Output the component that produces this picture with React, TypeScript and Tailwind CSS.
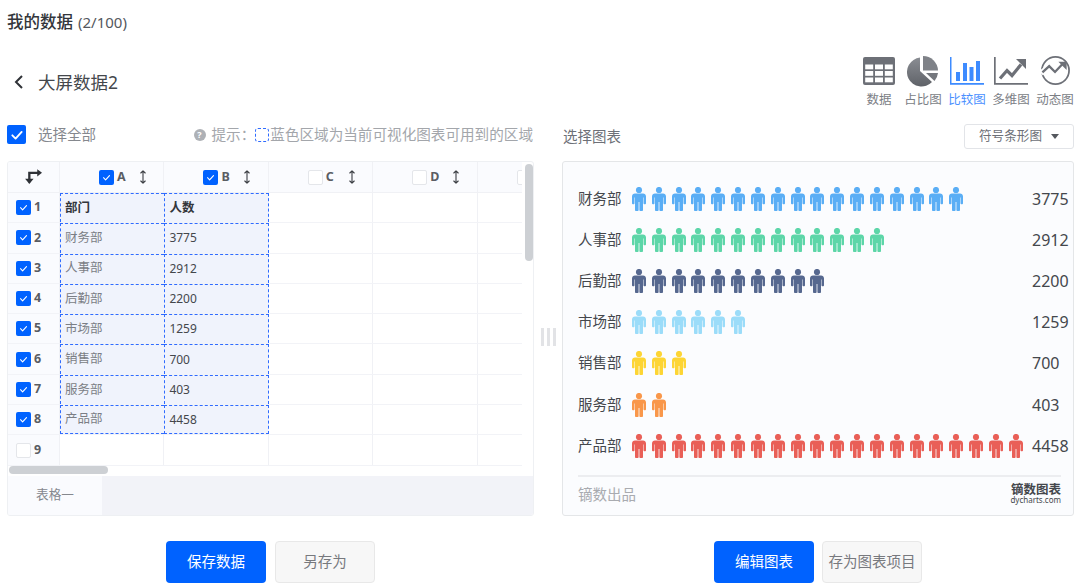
import React from "react";

const FONT = "[font-family:'Noto_Sans','Noto_Sans_CJK_SC',sans-serif]";

function Check({ on = true, size = "s" }: { on?: boolean; size?: "s" | "l" }) {
  const box = size === "l" ? "w-[19px] h-[19px]" : "w-[15px] h-[15px]";
  return (
    <span className={`${box} shrink-0 rounded-[2px] flex items-center justify-center ${on ? "bg-[#0062ff]" : "bg-white border border-[#e4e6ea]"}`}>
      {on && (
        <svg viewBox="0 0 12 12" className={size === "l" ? "w-[14px] h-[14px]" : "w-[9px] h-[9px]"} fill="none" stroke="#fff" strokeWidth={size === "l" ? 1.6 : 1.5} strokeLinecap="round" strokeLinejoin="round">
          <path d="M2 6.3l2.8 2.8L10 3.4" />
        </svg>
      )}
    </span>
  );
}

function SortIcon() {
  return (
    <svg viewBox="0 0 10 16" className="w-[10px] h-[16px]" fill="none" stroke="#3a3d42" strokeWidth="1.1" strokeLinecap="round" strokeLinejoin="round">
      <path d="M5 2v12M2.8 4L5 1.8 7.2 4M2.8 12L5 14.2 7.2 12" />
    </svg>
  );
}

function Person({ color }: { color: string }) {
  return (
    <svg viewBox="0 0 14 24" className="w-[14px] h-[24px] shrink-0" fill={color}>
      <circle cx="7" cy="3" r="3.1" />
      <path d="M3 6.5h8c1.7 0 3 1.3 3 3v6.7c0 .6-.5 1-1.200 1s-1.300-.4-1.300-1V10.500h-.5V23c0 .6-.5 1-1.200 1H8.600c-.7 0-1.200-.4-1.200-1v-8h-.8v8c0 .6-.5 1-1.200 1H4.200C3.500 24 3 23.600 3 23V10.500h-.5v5.700c0 .6-.5 1-1.200 1S0 16.800 0 16.200V9.500c0-1.700 1.300-3 3-3z" />
    </svg>
  );
}

const TOOLS = [
  {
    label: "数据",
    icon: (
      <svg viewBox="0 0 32 28" className="w-[32px] h-[28px]">
        <rect width="32" height="28" rx="2" fill="#6d7077" />
        {[0, 1, 2].map((c) =>
          [0, 1, 2].map((r) => (
            <rect key={`${c}${r}`} x={2.2 + c * 9.8} y={7.5 + r * 6.5} width="8" height="4.800" fill="#fff" />
          ))
        )}
      </svg>
    ),
  },
  {
    label: "占比图",
    icon: (
      <svg viewBox="0 0 32 32" className="w-[32px] h-[32px]">
        <defs>
          <linearGradient id="pie" x1="0" y1="0" x2="0" y2="1">
            <stop offset="0" stopColor="#8a8d93" />
            <stop offset="1" stopColor="#5f6268" />
          </linearGradient>
        </defs>
        <path d="M13 2.600A14.500 14.500 0 1 0 25 27L13 16z" fill="url(#pie)" />
        <path d="M16 1a15 15 0 0 1 15 14.500H16z" fill="#7f8288" />
        <path d="M19 18h12a15 15 0 0 1-3.500 8z" fill="#74777d" />
      </svg>
    ),
  },
  {
    label: "比较图",
    active: true,
    icon: (
      <svg viewBox="0 0 34 28" className="w-[34px] h-[28px]" fill="#3d8bff">
        <path d="M0 0h1.500v26H34v1.800H0z" />
        <rect x="6" y="15" width="4" height="9" />
        <rect x="13" y="6" width="4" height="18" />
        <rect x="19.500" y="10" width="4" height="14" />
        <rect x="26" y="4" width="4" height="20" />
      </svg>
    ),
  },
  {
    label: "多维图",
    icon: (
      <svg viewBox="0 0 34 28" className="w-[34px] h-[28px]">
        <path d="M0 0h1.700v26H34v1.800H0z" fill="#6d7077" />
        <path d="M6 21.500l7-8 5 5 9-11" fill="none" stroke="#6d7077" strokeWidth="3.200" />
        <path d="M22 2h10v10z" fill="#6d7077" />
      </svg>
    ),
  },
  {
    label: "动态图",
    icon: (
      <svg viewBox="0 0 32 32" className="w-[31px] h-[31px]" fill="none">
        <circle cx="16" cy="16" r="14" stroke="#6d7077" strokeWidth="1.800" />
        <path d="M1 19l8.500-7.500 6 6 7.500-8" stroke="#fff" strokeWidth="6" />
        <path d="M2.500 18l7-6.500 6 6 7.500-8" stroke="#6d7077" strokeWidth="2.400" />
        <path d="M19 7h8.500v8.500z" fill="#6d7077" />
      </svg>
    ),
  },
];

const ROWS: [string, string][] = [
  ["部门", "人数"],
  ["财务部", "3775"],
  ["人事部", "2912"],
  ["后勤部", "2200"],
  ["市场部", "1259"],
  ["销售部", "700"],
  ["服务部", "403"],
  ["产品部", "4458"],
  ["", ""],
];

const CHART = [
  { name: "财务部", n: 17, v: "3775", c: "#5aaef5" },
  { name: "人事部", n: 13, v: "2912", c: "#5dd6a8" },
  { name: "后勤部", n: 10, v: "2200", c: "#56688f" },
  { name: "市场部", n: 6, v: "1259", c: "#9bdcf9" },
  { name: "销售部", n: 3, v: "700", c: "#fdd534" },
  { name: "服务部", n: 2, v: "403", c: "#f9974a" },
  { name: "产品部", n: 20, v: "4458", c: "#e95f57" },
];

const DATA_CELL = "bg-[#f0f3fc] border-[#2f6bff] border-dashed border-l border-t";

export default function App() {
  return (
    <div className={`${FONT} w-[1080px] h-[586px] overflow-hidden bg-white flex flex-col px-[7px]`}>
      <div className="h-[44px] flex items-center text-[16.500px] text-[#33363b]">
        <span className="font-medium">我的数据</span>
        <span className="ml-[5px] text-[15px] text-[#55585e]">(2/100)</span>
      </div>

      <div className="h-[74px] flex justify-between">
        <div className="flex items-center h-[76px] pl-[6px] text-[17.500px] text-[#44474c]">
          <svg viewBox="0 0 12 16" className="w-[12px] h-[16px] mr-[13px]" fill="none" stroke="#2f3237" strokeWidth="2">
            <path d="M9 2L3 8l6 6" />
          </svg>
          大屏数据2
        </div>
        <div className="flex pt-[10px] -mr-[4px]">
          {TOOLS.map((t) => (
            <div key={t.label} className={`w-[44px] flex flex-col items-center ${t.active ? "text-[#4a90ff]" : "text-[#7b7e85]"}`}>
              <div className="h-[33px] flex items-center justify-center">{t.icon}</div>
              <div className="mt-[4px] text-[12.500px] leading-[18px] whitespace-nowrap">{t.label}</div>
            </div>
          ))}
        </div>
      </div>

      <div className="flex">
        <div className="w-[527px] shrink-0">
          <div className="h-[43px] flex items-start pt-[7px] justify-between">
            <div className="flex items-center gap-[12px] text-[14.500px] text-[#85888e] h-[19px]">
              <Check size="l" />
              选择全部
            </div>
            <div className="flex items-center text-[14.600px] text-[#a3a6ab] h-[19px] whitespace-nowrap pr-[1px]">
              <span className="w-[12px] h-[12px] rounded-full bg-[#aeb1b6] text-white text-[9px] font-bold leading-[12px] text-center mr-[6px]">?</span>
              提示：
              <span className="w-[14px] h-[14px] rounded-[3px] border border-dashed border-[#2f6bff] mr-[1px]" />
              蓝色区域为当前可视化图表可用到的区域
            </div>
          </div>

          <div className="relative h-[355px] rounded-[3px] border border-[#eef0f3] overflow-hidden flex flex-col">
            <div className="h-[304px] mr-[11px] overflow-hidden">
              <div className="flex h-[31px] bg-[#fafbfe] border-b border-[#f0f1f5]">
                <div className="w-[52px] shrink-0 border-r border-[#f0f1f5] flex items-center justify-center">
                  <svg viewBox="0 0 18 16" className="w-[19px] h-[18px] -mt-[2px] -ml-[3px]" fill="none" stroke="#2f3237" strokeWidth="2.200">
                    <path d="M6 14V5h9" />
                    <path d="M13.500 1.500L18 5l-4.500 3.500z" fill="#2f3237" stroke="none" />
                    <path d="M2 10.500h8L6 15.500z" fill="#2f3237" stroke="none" />
                  </svg>
                </div>
                {["A", "B", "C", "D", ""].map((l, i) => (
                  <div key={i} className="w-[104.400px] shrink-0 border-r border-[#f0f1f5] flex items-center pl-[39px] text-[12.500px] font-bold text-[#5a5d63]">
                    <Check on={i < 2} />
                    {l && <span className="ml-[3px] w-[21px]">{l}</span>}
                    {l && <SortIcon />}
                  </div>
                ))}
              </div>
              {ROWS.map((r, i) => (
                <div key={i} className="flex h-[30.300px] border-b border-[#f2f3f7] text-[12.500px]">
                  <div className="w-[52px] shrink-0 bg-[#fafbfe] border-r border-[#f0f1f5] flex items-center pl-[8px] gap-[3px] font-bold text-[#5a5d63]">
                    <Check on={i < 8} />
                    {i + 1}
                  </div>
                  {[0, 1].map((c) => (
                    <div
                      key={c}
                      className={`w-[104.400px] shrink-0 flex items-center pl-[4px] ${i < 8 ? `${DATA_CELL} ${c === 1 ? "border-r" : ""} ${i === 7 ? "border-b" : ""}` : "border-r border-[#f0f1f5]"} ${i === 0 ? "font-bold text-[#33363b]" : c === 0 ? "text-[#7b7e85]" : "text-[12px] text-[#44474c]"}`}
                    >
                      {r[c]}
                    </div>
                  ))}
                  {[0, 1, 2].map((c) => (
                    <div key={c} className="w-[104.400px] shrink-0 border-r border-[#f0f1f5]" />
                  ))}
                </div>
              ))}
            </div>
            <div className="h-[10px] pl-[1px] shrink-0">
              <div className="w-[99px] h-[8px] rounded-full bg-[#cdd0d4]" />
            </div>
            <div className="flex-1 flex bg-[#f2f3f8]">
              <div className="w-[94px] bg-[#fafbfe] flex items-center justify-center text-[12.600px] text-[#85888e]">表格一</div>
            </div>
            <div className="absolute top-[2px] right-0 w-[8px] h-[97px] rounded-full bg-[#cdd0d4]" />
          </div>

          <div className="flex justify-center gap-[9px] mt-[25px]">
            <button className="w-[100px] h-[42px] rounded-[4px] bg-[#0062ff] text-white text-[14.500px]">保存数据</button>
            <button className="w-[100px] h-[42px] rounded-[4px] bg-[#f7f7f7] border border-[#e8e8e8] text-[#77797e] text-[14.500px]">另存为</button>
          </div>
        </div>

        <div className="w-[28px] shrink-0 flex items-start justify-center pt-[210px]">
          <div className="flex gap-[3px]">
            <span className="w-[3px] h-[18px] bg-[#e2e3e6]" />
            <span className="w-[3px] h-[18px] bg-[#e2e3e6]" />
            <span className="w-[3px] h-[18px] bg-[#e2e3e6]" />
          </div>
        </div>

        <div className="w-[512px] shrink-0">
          <div className="h-[43px] flex justify-between items-start pt-[6px] text-[14.500px] text-[#6d7077]">
            <span className="leading-[25px] pl-[1px]">选择图表</span>
            <div className="w-[110px] h-[25px] rounded-[3px] border border-[#e2e4e8] flex items-center justify-center gap-[9px] text-[12.600px] text-[#6d7077]">
              符号条形图
              <span className="w-0 h-0 border-x-[4.500px] border-x-transparent border-t-[5px] border-t-[#55585e]" />
            </div>
          </div>

          <div className="h-[355px] rounded-[3px] border border-[#e4e6e8] bg-[#fbfcfe] pl-[15px] pr-[12px] flex flex-col">
            <div className="h-[313px] pt-[16px]">
              {CHART.map((d) => (
                <div key={d.name} className="h-[41.200px] flex items-center">
                  <span className="w-[54px] shrink-0 text-[14.500px] text-[#44474c]">{d.name}</span>
                  <div className="flex gap-[5.840px] flex-1">
                    {Array.from({ length: d.n }).map((_, i) => (
                      <Person key={i} color={d.c} />
                    ))}
                  </div>
                  <span className="shrink-0 w-[38px] -mr-[9px] text-left text-[16px] text-[#44474c]">{d.v}</span>
                </div>
              ))}
            </div>
            <div className="flex-1 border-t-2 border-[#ecedf0] flex items-center justify-between">
              <span className="text-[14.500px] text-[#a9abb0] -mt-[2px]">镝数出品</span>
              <div className="flex flex-col items-end text-[#44474c] -mt-[5px]">
                <span className="text-[12.500px] leading-[13px] font-bold [font-family:'Noto_Sans_CJK_SC',serif]">镝数图表</span>
                <span className="text-[8px] leading-[10px]">dycharts.com</span>
              </div>
            </div>
          </div>

          <div className="flex justify-center gap-[8px] mt-[25px]">
            <button className="w-[100px] h-[42px] rounded-[4px] bg-[#0062ff] text-white text-[14.500px]">编辑图表</button>
            <button className="w-[100px] h-[42px] rounded-[4px] bg-[#f7f7f7] border border-[#e8e8e8] text-[#77797e] text-[14.500px] whitespace-nowrap">存为图表项目</button>
          </div>
        </div>
      </div>
    </div>
  );
}
